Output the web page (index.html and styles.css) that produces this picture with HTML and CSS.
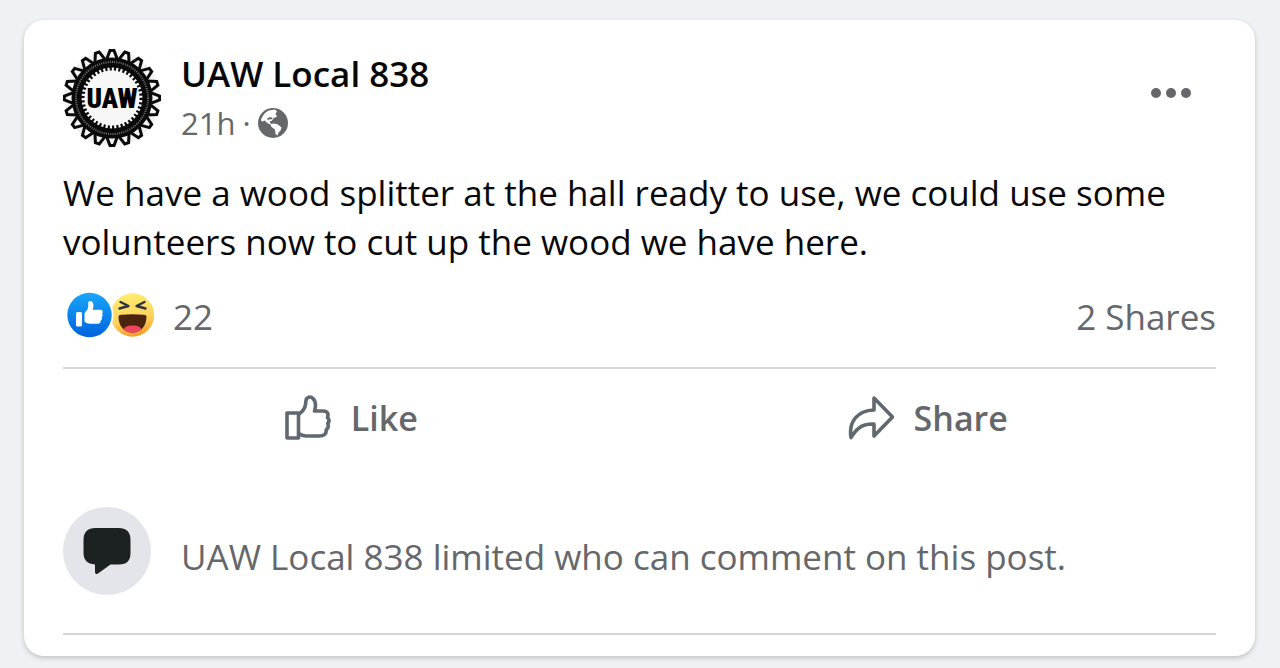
FILE: index.html
```html
<!DOCTYPE html>
<html lang="en">

<head>
    <meta charset="UTF-8">
    <meta name="viewport" content="width=device-width, initial-scale=1.0">
    <title>UAW Local 838</title>
    <link rel="stylesheet" href="styles.css">
</head>

<body>
    <article class="post">
        <header class="post-header">
            <a href="#" class="avatar" aria-label="UAW Local 838 profile">
                <svg viewBox="-49 -49 98 98">
                    <defs>
                        <path id="tooth" d="M-5.6 -38 L-2 -47.6 H2 L5.6 -38" />
                        <g id="teeth">
                            <use href="#tooth" />
                            <use href="#tooth" transform="rotate(18)" />
                            <use href="#tooth" transform="rotate(36)" />
                            <use href="#tooth" transform="rotate(54)" />
                            <use href="#tooth" transform="rotate(72)" />
                        </g>
                    </defs>
                    <circle r="48" fill="#f1f1f1" />
                    <g fill="#f4f4f4" stroke="#0a0a0a" stroke-width="3">
                        <use href="#teeth" />
                        <use href="#teeth" transform="rotate(90)" />
                        <use href="#teeth" transform="rotate(180)" />
                        <use href="#teeth" transform="rotate(270)" />
                    </g>
                    <circle r="35.5" fill="#f7f7f7" stroke="#0a0a0a" stroke-width="10" />
                    <circle r="36" fill="none" stroke="#777" stroke-width="2" stroke-dasharray="1 1.2" />
                    <circle r="29.5" fill="none" stroke="#0a0a0a" stroke-width="4" stroke-dasharray="2.2 2.2" />
                    <text class="avatar-text" y="10" text-anchor="middle">UAW</text>
                </svg>
            </a>
            <div class="post-info">
                <h2><a href="#">UAW Local 838</a></h2>
                <div class="post-meta">
                    <a href="#">21h</a>
                    <span>·</span>
                    <svg class="globe" viewBox="0 0 30 30" role="img" aria-label="Public">
                        <circle cx="15" cy="15" r="15" fill="#65676b" />
                        <path fill="#fff" d="M3 12.500C4 8 7 4 11 2.500L17 1.500 19 3.500 17.500 6 19 8.500 16 10 13.500 13 11.500 13.500 13 16 16 15.500 20 16.500 23.500 19.500 22.500 22.500 20.500 24.500 19.500 27.500 17.500 26 17 21.500 13.500 19 12.500 16.500 9 15 7 12.500 4.500 13.500z" />
                        <path fill="#65676b" d="M9 10.500l3-1.500 3 1-2 1.500-2-.3-1 1.300z" />
                    </svg>
                </div>
            </div>
            <button class="menu-btn" aria-label="More options">
                <svg viewBox="0 0 42 12" fill="#65676b">
                    <circle cx="6" cy="6" r="5" />
                    <circle cx="21" cy="6" r="5" />
                    <circle cx="36" cy="6" r="5" />
                </svg>
            </button>
        </header>

        <p class="post-text">We have a wood splitter at the hall ready to use, we could use some volunteers now to cut up the wood we have here.</p>

        <div class="stats">
            <button class="reactions" aria-label="22 reactions">
                <svg viewBox="0 0 88 46">
                    <defs>
                        <linearGradient id="blue" x1="0" y1="0" x2="0" y2="1">
                            <stop offset="0" stop-color="#18a7fa" />
                            <stop offset="1" stop-color="#0062dd" />
                        </linearGradient>
                        <linearGradient id="yellow" x1=".4" y1="0" x2=".6" y2="1">
                            <stop offset="0" stop-color="#ffed70" />
                            <stop offset=".6" stop-color="#fdd35c" />
                            <stop offset="1" stop-color="#f49a28" />
                        </linearGradient>
                    </defs>
                    <circle cx="65.500" cy="23" r="21.700" fill="url(#yellow)" />
                    <path d="M51.500 24.500Q51.500 22.800 54 22.800Q65.500 21.500 77 22.800Q79.500 22.800 79.500 24.500C79.500 34 74 40.500 65.500 40.500C57 40.500 51.500 34 51.500 24.500z" fill="#4b240f" />
                    <path d="M56.500 37.200Q59 33 65.500 33.500Q72 33 74.500 37.200Q71 40.700 65.500 40.700Q60 40.700 56.500 37.200z" fill="#f0455e" />
                    <path d="M53.500 10l8 4-9 2.500M77.500 10l-8 4 9 2.500" fill="none" stroke="#2f3443" stroke-width="2.400" stroke-linecap="round" stroke-linejoin="round" />
                    <circle cx="22.500" cy="23" r="24" fill="#fff" />
                    <circle cx="22.500" cy="23" r="22.200" fill="url(#blue)" />
                    <rect x="9" y="20" width="6" height="14.500" rx="1.500" fill="#fff" />
                    <path d="M17.500 22c0-2 2.500-3 3.500-6 .6-2 0-4.500.5-6 .4-1.500 3-1.500 4.200.5 1.200 2.200.8 4.700 0 7.200h7.800c2.300 0 2.900 2.600 1.500 4 1 1.200.7 2.700-.3 3.500.7 1.500 0 2.700-1 3.300.3 2-1 3.200-3 3.200h-7.500c-2.500 0-4-.7-5.700-2z" fill="#fff" />
                </svg>
                <span>22</span>
            </button>
            <button class="shares">2 Shares</button>
        </div>

        <div class="actions">
            <button class="action-btn">
                <svg viewBox="0 0 46 46" fill="none" stroke="#606870" stroke-width="3.600" stroke-linejoin="round">
                    <path d="M2 18h11.500v25H2z" />
                    <path d="M13.500 19.500C17 17 20 13.500 20.500 9.500L21 5.500C21.500 1.800 25.500 1 28 3.500C30.500 6 31 11 29.500 16H37C43.500 15.500 43.500 20 42.500 22.500C44.500 24.500 44.500 26.500 42.700 28.500C44 31.500 43 33.500 41.200 34.700C41.500 39 39 41 34.500 41H21Q17 41 13.500 38.500" />
                </svg>
                Like
            </button>
            <button class="action-btn">
                <svg viewBox="0 0 46 46" fill="none" stroke="#606870" stroke-width="3.600" stroke-linejoin="round">
                    <path d="M26 3L44.500 22L26 41V29C16 28.500 10 31.500 3 42.500C.5 27 9 15.500 26 15z" />
                </svg>
                Share
            </button>
        </div>

        <div class="comment-notice">
            <div class="comment-icon">
                <svg viewBox="0 0 48 48" fill="#1c2121">
                    <path d="M12.500 1h23Q47.500 1 47.500 13v13Q47.500 37.500 36 37.500H27.500L15 46.500Q12 48 12 45V37.500Q.5 36.500.5 26V13Q.5 1 12.500 1z" />
                </svg>
            </div>
            <p>UAW Local 838 limited who can comment on this post.</p>
        </div>
    </article>
</body>

</html>
```
FILE: styles.css
```css
* {
    margin: 0;
    padding: 0;
    box-sizing: border-box;
}

body {
    padding: 20px 25px 12px 24px;
    background-color: #f0f1f5;
    color: #080809;
    font-family: "Open Sans", "Noto Sans", sans-serif;
    font-size: 35px;
}

a {
    color: inherit;
    text-decoration: none;
}

button {
    border: none;
    background: none;
    color: #65676b;
    font: inherit;
    cursor: pointer;
}

svg {
    display: block;
}

.post {
    padding: 29px 39px 21px;
    border-radius: 20px;
    background-color: #fff;
    box-shadow: 0 2px 5px rgba(0, 0, 0, 0.2);
}

.post-header {
    display: flex;
    align-items: center;
    gap: 20px;
}

.avatar svg {
    width: 98px;
    height: 98px;
}

.avatar-text {
    font-family: "Roboto Condensed", "Liberation Sans Narrow", Roboto, sans-serif;
    font-size: 27px;
    font-weight: 900;
}

.post-info {
    flex: 1;
}

.post-info h2 {
    font-size: 35px;
    font-weight: 600;
    line-height: 50px;
}

.post-meta {
    display: flex;
    align-items: center;
    gap: 7px;
    color: #65676b;
    font-size: 31px;
    line-height: 48px;
}

.globe {
    width: 30px;
    height: 30px;
}

.menu-btn {
    padding: 14px 24px 24px;
}

.menu-btn svg {
    width: 42px;
    height: 12px;
}

.post-text {
    margin-top: 21px;
    line-height: 49px;
}

.stats {
    display: flex;
    justify-content: space-between;
    align-items: center;
    height: 103px;
    border-bottom: 2px solid #d5d6da;
    color: #65676b;
}

.reactions {
    display: flex;
    align-items: center;
    gap: 18px;
    margin-left: 4px;
}

.reactions svg {
    width: 88px;
    height: 46px;
    margin-bottom: 3px;
}

.actions {
    display: grid;
    grid-template-columns: 1fr 1fr;
}

.action-btn {
    display: flex;
    justify-content: center;
    align-items: center;
    gap: 20px;
    height: 98px;
    font-size: 34px;
    font-weight: 600;
}

.action-btn svg {
    width: 46px;
    height: 46px;
}

.comment-notice {
    display: flex;
    align-items: center;
    gap: 30px;
    margin-top: 40px;
    padding-bottom: 38px;
    border-bottom: 2px solid #d5d6da;
    color: #65676b;
}

.comment-notice p {
    padding-top: 10px;
}

.comment-icon {
    display: flex;
    justify-content: center;
    align-items: center;
    width: 88px;
    height: 88px;
    border-radius: 50%;
    background-color: #e4e5eb;
}

.comment-icon svg {
    width: 48px;
    height: 48px;
}
```
